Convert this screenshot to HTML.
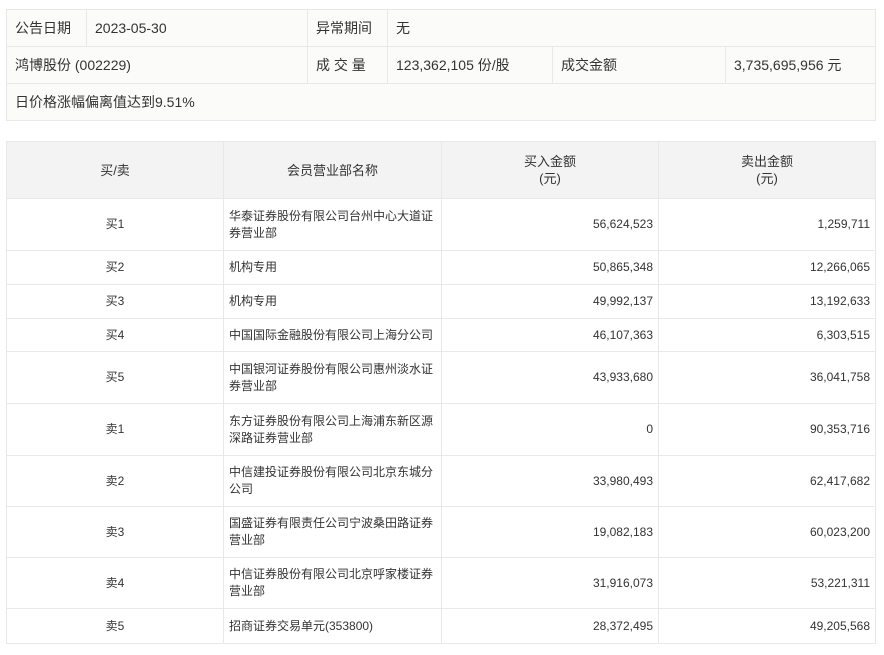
<!DOCTYPE html>
<html><head><meta charset="utf-8"><style>
body{margin:0;background:#fff;font-family:"Liberation Sans","Noto Sans CJK SC",sans-serif;font-size:13px;color:#333;}
table{border-collapse:collapse;position:absolute;left:6px;table-layout:fixed}
td{border:1px solid #e8e8e8;padding:0 8px;}
#t1{top:9px;width:869px;background:#fbfbf9}
#t1 td{height:36px;font-size:14px}
#t2{top:141px;width:869px}
#t2 td{font-size:12px;line-height:17px;padding:0 5px}
#t2 tr.h td{background:#f3f3f3;text-align:center;height:56px;font-size:13px}
#t2 td.c{text-align:center}
#t2 td.r{text-align:right}
</style></head><body>
<table id="t1">
<colgroup><col style="width:80px"><col style="width:221px"><col style="width:80px"><col style="width:165px"><col style="width:173px"><col style="width:150px"></colgroup>
<tr><td>公告日期</td><td>2023-05-30</td><td>异常期间</td><td colspan="3">无</td></tr>
<tr><td colspan="2">鸿博股份 (002229)</td><td>成 交 量</td><td>123,362,105 份/股</td><td>成交金额</td><td>3,735,695,956 元</td></tr>
<tr><td colspan="6">日价格涨幅偏离值达到9.51%</td></tr>
</table>
<table id="t2">
<colgroup><col style="width:217px"><col style="width:218px"><col style="width:217px"><col style="width:217px"></colgroup>
<tr class="h"><td>买/卖</td><td>会员营业部名称</td><td>买入金额<br>(元)</td><td>卖出金额<br>(元)</td></tr>
<tr style="height:52px"><td class="c">买1</td><td>华泰证券股份有限公司台州中心大道证券营业部</td><td class="r">56,624,523</td><td class="r">1,259,711</td></tr>
<tr style="height:34px"><td class="c">买2</td><td>机构专用</td><td class="r">50,865,348</td><td class="r">12,266,065</td></tr>
<tr style="height:34px"><td class="c">买3</td><td>机构专用</td><td class="r">49,992,137</td><td class="r">13,192,633</td></tr>
<tr style="height:33px"><td class="c">买4</td><td>中国国际金融股份有限公司上海分公司</td><td class="r">46,107,363</td><td class="r">6,303,515</td></tr>
<tr style="height:52px"><td class="c">买5</td><td>中国银河证券股份有限公司惠州淡水证券营业部</td><td class="r">43,933,680</td><td class="r">36,041,758</td></tr>
<tr style="height:52px"><td class="c">卖1</td><td>东方证券股份有限公司上海浦东新区源深路证券营业部</td><td class="r">0</td><td class="r">90,353,716</td></tr>
<tr style="height:51px"><td class="c">卖2</td><td>中信建投证券股份有限公司北京东城分公司</td><td class="r">33,980,493</td><td class="r">62,417,682</td></tr>
<tr style="height:51px"><td class="c">卖3</td><td>国盛证券有限责任公司宁波桑田路证券营业部</td><td class="r">19,082,183</td><td class="r">60,023,200</td></tr>
<tr style="height:51px"><td class="c">卖4</td><td>中信证券股份有限公司北京呼家楼证券营业部</td><td class="r">31,916,073</td><td class="r">53,221,311</td></tr>
<tr style="height:35px"><td class="c">卖5</td><td>招商证券交易单元(353800)</td><td class="r">28,372,495</td><td class="r">49,205,568</td></tr>
</table>
</body></html>
